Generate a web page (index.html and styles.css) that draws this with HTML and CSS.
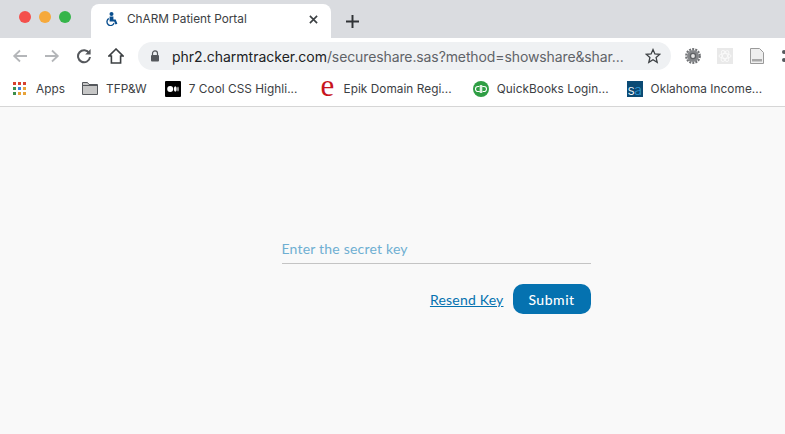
FILE: index.html
```html
<!DOCTYPE html>
<html lang="en">
<head>
<meta charset="utf-8">
<title>ChARM Patient Portal</title>
<link rel="stylesheet" href="styles.css">
</head>
<body>
<header class="chrome">
  <div class="tabstrip">
    <div class="lights"><i class="light red"></i><i class="light amber"></i><i class="light green"></i></div>
    <div class="tab">
      <svg class="favicon" viewBox="0 0 12 14"><circle cx="5.500" cy="2" r="2" fill="#0a4f8f"/><path d="M3.600 4.400h3.800v3.100h2.300l1.700 4.300-1.900.8-1.300-3H3.600z" fill="#0a4f8f"/><path d="M2.800 5.800a4.400 4.400 0 1 0 5.900 5.800l-1.200-.8a3 3 0 1 1-4.700-3.300z" fill="#0a4f8f"/></svg>
      <span class="tab-title">ChARM Patient Portal</span>
      <svg class="tab-close" viewBox="0 0 10 10"><path d="M1 1l8 8M9 1l-8 8" stroke="#3c4043" stroke-width="1.800" fill="none"/></svg>
    </div>
    <svg class="newtab" viewBox="0 0 12 12"><path d="M6 0v12M0 6h12" stroke="#303336" stroke-width="1.800" fill="none"/></svg>
  </div>
  <div class="toolbar">
    <svg class="nav" viewBox="0 0 16 16"><path d="M15 8H2M8 2.500L2.200 8 8 13.500" stroke="#b4b6b9" stroke-width="1.800" fill="none"/></svg>
    <svg class="nav" viewBox="0 0 16 16"><path d="M1 8h13M8 2.500L13.800 8 8 13.500" stroke="#b4b6b9" stroke-width="1.800" fill="none"/></svg>
    <svg class="nav" viewBox="0 0 16 16"><path d="M13.200 5.200A6 6 0 1 0 14 9" stroke="#55585c" stroke-width="2" fill="none"/><path d="M14.600 1v5.400H9.200z" fill="#55585c"/></svg>
    <svg class="nav" viewBox="0 0 16 16"><path d="M8 1L1 8h2.400v7h9.200V8H15z" stroke="#3c4043" stroke-width="1.600" fill="none"/></svg>
    <div class="omnibox">
      <svg class="lock" viewBox="0 0 10 12"><path d="M2.500 5V3.400a2.500 2.500 0 0 1 5 0V5" stroke="#55585c" stroke-width="1.200" fill="none"/><rect x="1" y="5" width="8" height="6.600" rx="1" fill="#55585c"/></svg>
      <span class="url"><span class="host">phr2.charmtracker.com</span>/secureshare.sas?method=showshare&amp;shar...</span>
      <svg class="star" viewBox="0 0 16 16"><path d="M8 1.600l1.900 4.400 4.800.4-3.600 3.200 1.100 4.700L8 11.800l-4.200 2.500 1.100-4.700L1.300 6.400l4.800-.4z" stroke="#3c4043" stroke-width="1.300" fill="none"/></svg>
    </div>
    <svg class="ext ext-gear" viewBox="0 0 16 16"><circle cx="8" cy="8" r="6.800" fill="none" stroke="#707275" stroke-width="2.200" stroke-dasharray="2 1.100"/><circle cx="8" cy="8" r="6" fill="#85878a"/><circle cx="8" cy="8" r="3.200" fill="#5f6164"/><circle cx="8" cy="8" r="1.900" fill="#e6e6e6"/></svg>
    <svg class="ext ext-atom" viewBox="0 0 16 16"><rect width="16" height="16" fill="#e9e9e9"/><g fill="none" stroke="#fafafa" stroke-width="0.900"><ellipse cx="8" cy="8" rx="6" ry="2.500"/><ellipse cx="8" cy="8" rx="6" ry="2.500" transform="rotate(60 8 8)"/><ellipse cx="8" cy="8" rx="6" ry="2.500" transform="rotate(120 8 8)"/></g></svg>
    <svg class="ext ext-doc" viewBox="0 0 14 16"><path d="M.5.500h9l4 4v11H.5z" fill="#eeeeee" stroke="#9a9a9a"/><rect x="2" y="11" width="10" height="2.500" fill="#a8a8a8"/></svg>
    <div class="more"><i></i><i></i></div>
  </div>
  <nav class="bookmarks">
    <span class="mark mark-apps">
      <svg class="mark-icon apps" viewBox="0 0 13 13"><rect width="3" height="3" fill="#d8412f"/><rect x="5" width="3" height="3" fill="#d8412f"/><rect x="10" width="3" height="3" fill="#d8412f"/><rect y="5" width="3" height="3" fill="#3c8f4c"/><rect x="5" y="5" width="3" height="3" fill="#3b7fdc"/><rect x="10" y="5" width="3" height="3" fill="#e8a33a"/><rect y="10" width="3" height="3" fill="#3c8f4c"/><rect x="5" y="10" width="3" height="3" fill="#e8a33a"/><rect x="10" y="10" width="3" height="3" fill="#e8a33a"/></svg>
      Apps
    </span>
    <span class="mark mark-folder">
      <svg class="mark-icon folder" viewBox="0 0 16 13"><path d="M.5 12.500V.5h5l1.500 2h8.500v10z" fill="#c6c6c6" stroke="#55585c"/><path d="M.5 3.500h15" stroke="#55585c"/></svg>
      TFP&amp;W
    </span>
    <span class="mark mark-medium">
      <svg class="mark-icon" viewBox="0 0 16 16"><rect width="16" height="16" rx="1" fill="#000"/><circle cx="5.200" cy="8" r="3" fill="#fff"/><ellipse cx="10.300" cy="8" rx="1.400" ry="2.800" fill="#fff"/><ellipse cx="13" cy="8" rx=".6" ry="2.500" fill="#fff"/></svg>
      7 Cool CSS Highli...
    </span>
    <span class="mark mark-epik">
      <span class="mark-icon epik">e</span>
      Epik Domain Regi...
    </span>
    <span class="mark mark-qb">
      <svg class="mark-icon" viewBox="0 0 16 16"><circle cx="8" cy="8" r="8" fill="#2f9e44"/><path d="M7.300 4v8M6.300 5.500H5a2.500 2.500 0 0 0 0 5h1.600M8.700 12V4M9.700 10.500H11a2.500 2.500 0 0 0 0-5H9.400" stroke="#fff" stroke-width="1.100" fill="none"/></svg>
      QuickBooks Login...
    </span>
    <span class="mark mark-sa">
      <span class="mark-icon sa">s<span class="sa-a">a</span></span>
      Oklahoma Income...
    </span>
  </nav>
</header>
<main class="page">
  <form class="keyform">
    <input class="keyinput" type="text" placeholder="Enter the secret key">
    <div class="actions">
      <a class="resend" href="#">Resend Key</a>
      <button class="submit" type="button">Submit</button>
    </div>
  </form>
</main>
</body>
</html>
```
FILE: styles.css
```css
* { box-sizing: border-box; }
html, body { margin: 0; height: 100%; }
body {
  width: 785px;
  height: 434px;
  overflow: hidden;
  display: flex;
  flex-direction: column;
  background: #f9f9f9;
  font-family: Inter, "Liberation Sans", sans-serif;
}
.chrome { flex: none; border-bottom: 1px solid #d6d6d6; background: #fff; }
.tabstrip {
  height: 38px;
  background: #dadce0;
  display: flex;
  align-items: flex-end;
  padding-left: 19px;
}
.lights { display: flex; gap: 8px; align-self: flex-start; margin-top: 11px; width: 72px; }
.light { width: 12px; height: 12px; border-radius: 50%; display: block; }
.red { background: #f4504c; }
.amber { background: #f6a93b; }
.green { background: #35b54a; }
.tab {
  width: 240px;
  height: 34px;
  background: #fff;
  border-radius: 8px 8px 0 0;
  display: flex;
  align-items: center;
  padding: 0 13px 4px 15px;
}
.favicon { width: 12px; height: 14px; flex: none; }
.tab-title { flex: 1; margin-left: 9px; font-size: 11.800px; color: #3c4043; white-space: nowrap; }
.tab-close { width: 9px; height: 9px; flex: none; }
.newtab { width: 13px; height: 13px; margin: 0 0 10px 15px; flex: none; }
.toolbar {
  height: 36px;
  display: flex;
  align-items: center;
  padding-left: 12px;
}
.nav { width: 16px; height: 16px; flex: none; margin-right: 16px; }
.nav:nth-child(4) { margin-right: 14px; }
.omnibox {
  width: 533px;
  height: 28px;
  flex: none;
  background: #eff1f3;
  border-radius: 14px;
  display: flex;
  align-items: center;
  padding: 0 10px 0 12px;
}
.lock { width: 10px; height: 12px; flex: none; }
.url { flex: 1; margin-left: 12px; font-size: 14px; letter-spacing: -.11px; color: #5f6368; white-space: nowrap; overflow: hidden; }
.host { color: #202124; letter-spacing: 0; }
.star { width: 16px; height: 16px; flex: none; }
.ext { flex: none; height: 16px; width: 16px; }
.ext-gear { margin-left: 14px; }
.ext-atom { margin-left: 16px; }
.ext-doc { margin-left: 17px; width: 14px; }
.more { margin-left: 18px; flex: none; display: flex; flex-direction: column; gap: 4px; }
.more i { display: block; width: 4px; height: 4px; border-radius: 50%; background: #55585c; }
.bookmarks {
  height: 32px;
  display: flex;
  align-items: center;
  padding: 0 0 3px 13px;
  font-size: 11.800px;
  letter-spacing: .05px;
  color: #3c4043;
  white-space: nowrap;
}
.mark { display: flex; align-items: center; gap: 8px; flex: none; }
.mark-folder { margin-left: 17px; }
.mark-medium { margin-left: 18px; }
.mark-epik { margin-left: 22px; }
.mark-qb { margin-left: 21px; }
.mark-sa { margin-left: 18px; }
.mark-icon { width: 16px; height: 16px; flex: none; display: block; }
.apps { width: 13px; height: 13px; margin-right: 2px; }
.folder { height: 13px; }
.epik {
  font-family: "Liberation Serif", serif;
  font-size: 31px;
  line-height: 9px;
  color: #c8161d;
  text-align: center;
}
.sa {
  background: #0b4a74;
  color: #fff;
  font-size: 14px;
  font-weight: 300;
  line-height: 18px;
  letter-spacing: -.4px;
  text-align: center;
}
.sa-a { color: #2f9bd8; }
.page { flex: 1; display: flex; justify-content: center; padding: 127px 0 0 87px; }
.keyform { width: 309px; }
.keyinput {
  display: block;
  width: 100%;
  height: 30px;
  border: 0;
  border-bottom: 1px solid #c4c4c4;
  background: transparent;
  padding: 0;
  font-family: Lato, sans-serif;
  font-size: 14px;
  letter-spacing: .2px;
  outline: none;
}
.keyinput::placeholder { color: #6fafd2; opacity: 1; }
.actions { display: flex; justify-content: flex-end; align-items: center; gap: 9px; margin-top: 20px; }
.resend { font-family: Lato, sans-serif; font-size: 14px; letter-spacing: .2px; color: #0572b0; }
.submit {
  width: 78px;
  height: 30px;
  border: 0;
  border-radius: 10px;
  background: #0572b0;
  color: #fff;
  font-family: Lato, sans-serif;
  font-size: 14px;
  font-weight: 500;
  letter-spacing: .5px;
}
```
